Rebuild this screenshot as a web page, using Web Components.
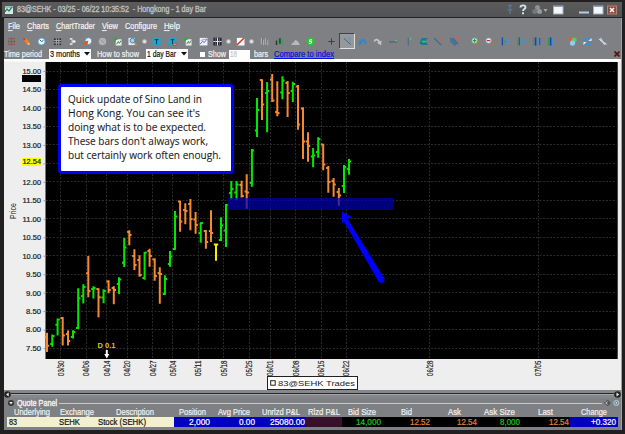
<!DOCTYPE html>
<html lang="en">
<head>
<meta charset="utf-8">
<title>83@SEHK</title>
<style>
  html, body { margin: 0; padding: 0; background: #211f20; }
  body { font-family: "Liberation Sans", Arial, sans-serif; overflow: hidden; }
</style>
</head>
<body>
<trader-window></trader-window>

<script>
// A single line of text set to an exact width
class FitText extends HTMLElement {
  constructor() {
    super();
    this.attachShadow({ mode: 'open' });
  }

  connectedCallback() {
    const w = parseFloat(this.getAttribute('w'));
    const size = parseFloat(this.getAttribute('size') || 9);
    const key = this.getAttribute('key');
    const s = this.getAttribute('text');
    let inner = s.replace(/&/g, '&amp;');
    if (key !== null) {
      const k = parseInt(key);
      inner = `${s.slice(0, k)}<tspan text-decoration="underline">${s[k]}</tspan>${s.slice(k + 1)}`;
    }
    this.shadowRoot.innerHTML = `
      <style>
        :host { display: block; flex: none; width: ${w}px; height: ${size}px; }
        svg { display: block; overflow: visible; }
        text { font-size: ${size}px; fill: currentColor; stroke: currentColor; stroke-width: var(--weight, .2px); white-space: pre; }
      </style>
      <svg width="${w}" height="${size}"><text x="0" y="${size * 0.86}" textLength="${w}" lengthAdjust="spacingAndGlyphs">${inner}</text></svg>
    `;
  }
}
customElements.define('fit-text', FitText);

const fit = (text, w, size = 9, extra = '') => `<fit-text text="${text.replace(/&/g, '&amp;')}" w="${w}" size="${size}" ${extra}></fit-text>`;

// Icon artwork on a 10x10 grid
const ICONS = {
  move: '<path d="M5 .5l1.500 2h-3zM5 9.500l1.500-2h-3zM.5 5l2-1.500v3zM9.500 5l-2-1.500v3z" fill="#d11f2a"/><path d="M1.500 2h1.500M7 2h1.500M1.500 8h1.500M7 8h1.500" stroke="#a33" stroke-width="1.200"/><rect x="4" y="4" width="2" height="2" fill="#555"/>',
  pencil: '<path d="M1 2l3-1 5 5-1 3-3-1z" fill="#ee8122"/><path d="M1 2l2-1 1 2-2 1z" fill="#c33"/><path d="M7 6l2 3-3-1z" fill="#ffd28a"/>',
  clock: '<circle cx="5" cy="5" r="4" fill="#e8f6ff" stroke="#4a9cc4"/><path d="M5 5L3 3M5 5l2-1" stroke="#234" stroke-width=".9"/>',
  grid: '<rect x="1" y="1.5" width="8" height="7.5" fill="#34363c"/><path d="M1 4h8M1 6.5h8M3.7 1.5V9M6.4 1.5V9" stroke="#ccc" stroke-width=".8"/>',
  export: '<path d="M2 1h3v3h3v2H5v3H2V7h2V3H2z" fill="#d9dadd"/><path d="M6 3l3 2-3 2z" fill="#eee"/>',
  clockEdit: '<circle cx="6" cy="4.5" r="3.8" fill="#e8f6ff" stroke="#4a9cc4"/><path d="M1 9l1-4 4-1-1 4z" fill="#e8521f"/>',
  disc: '<circle cx="5" cy="5" r="4.2" fill="#b1b1b1"/><path d="M3 3l4 4" stroke="#999"/>',
  chartAdd: '<rect x="3" y="2.5" width="6.5" height="7" fill="#e7efe9"/><path d="M4 8l2-3 1 2 2-3" stroke="#3a7a55" fill="none"/><path d="M2.5 0v5M0 2.5h5" stroke="#28b13a" stroke-width="1.6"/>',
  search: '<rect x=".5" y="1" width="7" height="8" fill="#dfe7ee"/><circle cx="5" cy="4" r="2.6" fill="#9fd3f5" stroke="#3b7db0"/><path d="M7 6l2.5 3" stroke="#d88a36" stroke-width="1.6"/>',
  dot: '<circle cx="5" cy="5" r="2.5" fill="#c2c2c2"/><circle cx="5" cy="5" r="1.300" fill="#e8e8e8"/>',
  textBox: '<rect x=".8" y=".8" width="8.6" height="8.6" fill="#19a5dd"/><path d="M3 3h4.2M5.1 3v5" stroke="#063a52" stroke-width="1.1"/>',
  textDel: '<rect x=".8" y=".8" width="8.4" height="8" fill="#19a5dd"/><path d="M3 3h4M5 3v5" stroke="#063a52"/><circle cx="7.5" cy="8" r="2" fill="#e23b22"/><path d="M6.5 8h2" stroke="#fff" stroke-width=".8"/>',
  chartLine: '<rect x=".8" y="1" width="8.6" height="8.4" fill="#eef2fa"/><path d="M1 8l3-3 2 1 3-4" stroke="#3b62d8" fill="none"/><path d="M2 4l3-1 3-1" stroke="#da5d68" stroke-width=".7"/>',
  panes: '<rect x=".5" y=".8" width="9" height="8.6" fill="#24242d"/><path d="M5 .8v8.6M.5 5h9" stroke="#dfe4f1" stroke-width="1.2"/><path d="M2.7 1v8M7.3 1v8" stroke="#777c91" stroke-width=".7"/>',
  pen: '<rect x="1" y="1" width="8.4" height="8.4" fill="#fafafa"/><path d="M1 9l8-8" stroke="#d6331d" stroke-width="1.6"/>',
  bars: '<path d="M1.5 1v7M4 3v6M6.3 1.5v7M8.6 3v6" stroke="#b9b9b9"/><path d="M2.8 2v5M7.5 2v5" stroke="#666" stroke-width=".6"/>',
  candles: '<path d="M1.7 4v5M5.5 1.5v6" stroke="#333" stroke-width="1.6"/><path d="M3.4 2v6M8 2v7" stroke="#2fa254" stroke-width="1.3"/>',
  area: '<path d="M.5 9V7.500l2-1L5 3l2 1.500 2.500 3V9z" fill="#b8b8b8"/>',
  money: '<circle cx="5" cy="5" r="4.5" fill="#26c52d"/><path d="M6.8 3.2H4.1L3.7 5h2.7L6 6.9H3.2" fill="none" stroke="#fff" stroke-width="1.1"/>',
  plus: '<path d="M5 1.5v7M1.5 5h7" stroke="#37393d"/>',
  line: '<path d="M1 1.5l7.5 7" stroke="#1b6ea6" stroke-width="1.1"/><path d="M5 1h3v7" stroke="#4f7390" fill="none" stroke-width=".7" stroke-dasharray="1 1"/>',
  undo: '<path d="M3 6.500C3.500 2.500 8 1 8.500 8" stroke="#2489d6" stroke-width="2" fill="none"/><path d="M.5 4l5 2.500-4.500 3z" fill="#2489d6"/>',
  redo: '<path d="M7 6.500C6.500 2.500 2.500 1.500 1.500 5" stroke="#c4c4c4" stroke-width="2" fill="none"/><path d="M9.500 4l-5 2.500 4.500 3z" fill="#c4c4c4"/>',
  hline: '<path d="M0 5.5h9" stroke="#315f70"/><circle cx="7.5" cy="4" r="1" fill="#4fd65d"/>',
  vline: '<path d="M2.5 1v8.5" stroke="#2e6c91"/><circle cx="5" cy="2" r="1" fill="#4fd65d"/>',
  label: '<path d="M3 1h6.500v1.500H8V7h1.500v2H3L.5 7z" fill="#147d94"/><path d="M3.500 5h4" stroke="#35d978" stroke-width="1.500"/>',
  lineDel: '<path d="M0 1l8 8" stroke="#286d9c" stroke-width="1.2"/><rect x="6" y=".8" width="3" height="3" fill="#e55746"/>',
  linesDel: '<path d="M0 1l7 7M0 4l6 5.5M3 1l6 7" stroke="#286d9c" stroke-width="1.2"/><rect x="6.5" y=".8" width="3" height="3" fill="#e55746"/>',
  zoomIn: '<path d="M5.5 5.5L9 9" stroke="#b4763c" stroke-width="1.7"/><circle cx="4" cy="4" r="3" fill="#d8f4d2" stroke="#7ca1bd" stroke-width=".8"/><path d="M4 2v4M2 4h4" stroke="#1ba51f" stroke-width="1.4"/>',
  zoomOut: '<path d="M5.5 5.5L9 9" stroke="#b4763c" stroke-width="1.7"/><circle cx="4" cy="4" r="3" fill="#e6eff6" stroke="#7ca1bd" stroke-width=".8"/><path d="M2 4h4" stroke="#d12d1d" stroke-width="1.4"/>',
  stepR: '<path d="M1.500 .5v9" stroke="#1c3fb8" stroke-width="1.3"/><path d="M3.500 2v6" stroke="#25a54e"/><path d="M5 5h3" stroke="#25b"/><path d="M6 2.500L9.500 5 6 7.500z" fill="#3a94e4"/>',
  stepRR: '<path d="M1 .5v9" stroke="#25a53e" stroke-width="1.2"/><path d="M2.600 .5v9" stroke="#1c3fb8"/><path d="M4 5h4" stroke="#3a94e4"/><path d="M6 2.500L9.500 5 6 7.500z" fill="#3a94e4"/>',
  squeeze: '<path d="M1.5 .5v9" stroke="#25a53e" stroke-width="1.2"/><path d="M4 .5v9" stroke="#1c3fb8" stroke-width="1.8"/><path d="M5 2.8L8 .8v4zM5 7L8 5v4z" fill="#3a94e4"/><path d="M8.6 1v8" stroke="#1c3fb8"/>',
  spread: '<path d="M1.5 .5v9" stroke="#25a53e" stroke-width="1.2"/><path d="M4 .5v9" stroke="#1c3fb8" stroke-width="1.8"/><path d="M8.8 2.8L5.800 .8v4zM8.8 7L5.800 5v4z" fill="#3a94e4"/>',
  balls: '<circle cx="3.5" cy="3.300" r="2.9" fill="#e15c36"/><circle cx="6.8" cy="3.4" r="2.8" fill="#60c95a"/><circle cx="5" cy="6.800" r="2.9" fill="#8ccdf2"/>',
  refresh: '<path d="M1.5 4.5C2 1 7 .5 8.5 3.5M8.5 5.5C8 9 3 9.5 1.5 6.5" fill="none" stroke="#2a96df" stroke-width="1.7"/><path d="M9.5 1v3.4H6zM.5 9V5.6H4z" fill="#d7eefc"/>',
  wrench: '<path d="M2.5 2.7l5.6 5.6" stroke="#c7d4e2" stroke-width="2"/><path d="M.8 2l2 2L4 2.5 2.5.8M6.5 8L8 6.5l1.5 2" stroke="#d7e1ec" fill="none" stroke-width="1.1"/>'
};

const TOOLS = [
  ['move', 11], ['pencil', 26.5], ['clock', 41.5], ['grid', 57], ['export', 72], ['clockEdit', 87],
  ['disc', 102.5], ['chartAdd', 117.5], ['search', 132.5], ['dot', 144], ['textBox', 156.5],
  ['textDel', 172], ['chartAdd', 187], ['chartLine', 203], ['panes', 217.5], ['dot', 228.5],
  ['pen', 240.5], ['dot', 251.5], ['bars', 264.5], ['candles', 279.5], ['area', 295], ['money', 310.5],
  ['plus', 331.5], ['line', 347, true], ['undo', 362], ['redo', 377], ['hline', 393], ['vline', 410],
  ['label', 423.5], ['lineDel', 438.5], ['linesDel', 454], ['zoomIn', 475], ['zoomOut', 489.5],
  ['stepR', 505], ['stepRR', 521], ['squeeze', 536], ['spread', 551], ['balls', 572],
  ['refresh', 587], ['wrench', 602.5]
];

class TitleBar extends HTMLElement {
  constructor() {
    super();
    this.attachShadow({ mode: 'open' }).innerHTML = `
      <style>
        :host {
          display: flex; align-items: center; box-sizing: border-box; height: 16px;
          padding: 0 5px 0 3px; background: linear-gradient(#5b5b5c, #515253);
          border-bottom: 1px solid #222; color: #bdbdbd;
        }
        .logo { margin-right: 3.5px; }
        .tools { display: flex; align-items: center; margin-left: auto; }
        svg { display: block; }
        fit-text { --weight: .4px; }
      </style>
      <svg class="logo" width="8" height="8"><rect width="8" height="8" fill="#dce6ec"/><path d="M0 6l2-3 2 2 3-4" stroke="#26874a" fill="none" stroke-width="1.3"/><path d="M0 1h8" stroke="#4b8fc0"/></svg>
      ${fit('83@SEHK - 03/25 - 06/22 10:35:52  - Hongkong - 1 day Bar', 189, 8.3)}
      <div class="tools">
        <svg width="112" height="14" viewBox="505 3 112 14">
          <path d="M508 5.500h4M510 5v4.500M507.500 9.700h5M510 10v4" stroke="#56768f" stroke-width="1.500"/>
          <path d="M520.500 7.500c0-2.800 5-2.800 5 0 0 1.500-2.500 1.700-2.500 3.500M523 12.300v1.900" fill="none" stroke="#cfe6f2" stroke-width="1.900"/>
          <circle cx="537.500" cy="7.500" r="2.500" fill="#909090"/><circle cx="534.700" cy="11.500" r="2.500" fill="#777"/><circle cx="539.500" cy="11.500" r="2.500" fill="#999"/>
          <path d="M543.500 9h4l-2 3z" fill="#aaa"/>
          <rect x="553.500" y="6" width="9.500" height="8" fill="#f5f6f8" stroke="#9bb1c5"/><path d="M553.500 6.500h9.500" stroke="#7fa2c6"/>
          <rect x="579" y="11.500" width="10" height="2" fill="#b4cde3"/>
          <rect x="593.500" y="6" width="9.500" height="8" fill="#f5f6f8" stroke="#9bb1c5"/><path d="M593.500 6.500h9.500" stroke="#7fa2c6"/>
          <rect x="607.500" y="6" width="9" height="8" fill="#8e4a3c" stroke="#b97e70"/><path d="M610 8l4 4M614 8l-4 4" stroke="#fff" stroke-width="1.500"/>
        </svg>
      </div>
    `;
  }
}
customElements.define('title-bar', TitleBar);

class MenuBar extends HTMLElement {
  constructor() {
    super();
    const items = [['File', 12, 0], ['Charts', 22, 0], ['ChartTrader', 39, 0], ['View', 16, 0], ['Configure', 32, 2], ['Help', 16, 0]];
    this.attachShadow({ mode: 'open' }).innerHTML = `
      <style>
        :host { display: flex; align-items: center; gap: 7px; height: 15px; padding: 1px 0 0 4px; box-sizing: border-box; color: #f4f4f4; }
      </style>
      ${items.map(([t, w, k]) => fit(t, w, 8.3, `key="${k}"`)).join('')}
    `;
  }
}
customElements.define('menu-bar', MenuBar);

class ToolStrip extends HTMLElement {
  constructor() {
    super();
    let edge = 4;
    const cells = TOOLS.map(([name, cx, on]) => {
      const size = on ? 16 : 9;
      const gap = cx - size / 2 - edge;
      edge = cx + size / 2;
      return `<span class="${on ? 'on' : ''}" style="margin-left:${gap}px"><svg width="9" height="9" viewBox="0 0 10 10">${ICONS[name]}</svg></span>`;
    });
    this.attachShadow({ mode: 'open' }).innerHTML = `
      <style>
        :host { display: flex; align-items: center; height: 16px; }
        span { display: flex; flex: none; align-items: center; justify-content: center; width: 9px; }
        .on {
          width: 16px; height: 16px; box-sizing: border-box; background: #96999c;
          border: 1px solid; border-color: #404347 #e0e0e0 #e0e0e0 #404347;
        }
        svg { display: block; flex: none; }
      </style>
      ${cells.join('')}
    `;
  }
}
customElements.define('tool-strip', ToolStrip);

class DropSelect extends HTMLElement {
  constructor() {
    super();
    this.attachShadow({ mode: 'open' });
  }

  connectedCallback() {
    this.shadowRoot.innerHTML = `
      <style>
        :host {
          display: flex; flex: none; align-items: center; justify-content: space-between; box-sizing: border-box;
          width: 42px; height: 10px; padding: 0 1.5px 0 1px; background: #fff; color: #111;
        }
      </style>
      <slot></slot>
      <svg width="6" height="4"><path d="M0 0h6L3 3.500z" fill="#111"/></svg>
    `;
  }
}
customElements.define('drop-select', DropSelect);

class PeriodBar extends HTMLElement {
  constructor() {
    super();
    this.attachShadow({ mode: 'open' }).innerHTML = `
      <style>
        :host { display: flex; align-items: center; height: 10px; color: #f2f2f2; }
        .box { width: 5px; height: 5px; margin-left: 6px; background: #fff; flex: none; }
        .count { display: flex; align-items: center; width: 20px; height: 9px; margin: 0 4px 0 3px; padding-left: 1px; background: #fff; color: #c4c4c4; }
        .link { color: #0b10d8; border-bottom: 1px solid #0b10d8; height: 8px; margin-left: 6px; }
        .close { margin: 0 1px 0 auto; }
        drop-select { margin: 0 6px 0 7px; }
      </style>
      ${fit('Time period', 38, 8.3)}
      <drop-select>${fit('3 months', 30, 8.3)}</drop-select>
      ${fit('How to show', 42, 8.3)}
      <drop-select>${fit('1 day Bar', 29, 8.3)}</drop-select>
      <span class="box"></span>
      <span style="margin-left:3px">${fit('Show', 18, 8.3)}</span>
      <span class="count">${fit('18', 7, 8.3)}</span>
      ${fit('bars', 14, 8.3)}
      <span class="link">${fit('Compare to index', 60, 8.3)}</span>
      <svg class="close" width="6" height="6"><path d="M.5 .5l5 5M5.500 .5l-5 5" stroke="#5c0d0d" stroke-width="1.600"/></svg>
    `;
  }
}
customElements.define('period-bar', PeriodBar);

// x, high, low, open, close, in window pixels; colour follows from open and close
const BARS = [
  [47, 332.7, 352, 337, 345.7], [52.3, 334.5, 346.7, 344, 336], [57.6, 318.5, 335.6, 324.7, 319.5],
  [62.7, 317, 345.6, 318, 335.6], [68, 330.6, 345.6, 334, 341], [73, 330.3, 338.6, 337, 332],
  [78.2, 288.3, 329, 328, 298.3], [83.3, 284.3, 303.6, 296, 287], [88.3, 256, 297.3, 273.3, 291],
  [93.4, 286.3, 298.6, 289, 288], [98.5, 288.3, 317.3, 289, 297.3], [103.6, 289.3, 303.3, 297.5, 291],
  [108.6, 280.3, 293.3, 281.5, 290], [113.8, 286.3, 304.3, 288, 290], [119, 277.3, 294, 284, 279.5],
  [124.2, 238, 267, 262.7, 247.5], [129.3, 230.3, 245.3, 232, 235], [134.4, 249.3, 270, 256, 265],
  [139.5, 255.3, 276.7, 260, 275], [144.6, 252, 279.7, 278, 252.5], [149.6, 248.7, 266.7, 251, 256],
  [154.7, 258.3, 280.7, 259.5, 276], [159.8, 267.3, 303.7, 273, 274], [164.9, 275.3, 295, 294, 279],
  [170, 251, 266.7, 264, 256.5], [175, 211, 250, 249, 216.5], [180.1, 200.7, 231.7, 201.5, 221.5],
  [185.3, 203.3, 224.3, 210, 211], [190.4, 199, 230.3, 204, 219], [195.6, 212, 233.7, 219.5, 225],
  [200.7, 222.3, 242.7, 233, 223], [205.9, 230, 248.7, 231, 242], [211, 210.3, 242, 231, 233],
  [216, 243.7, 260.8, 244.5, 244.5], [221, 217.3, 241, 240, 225.5], [226, 204, 247, 230.5, 205],
  [231.3, 181, 199.5, 193, 189], [236.5, 181, 200, 192.5, 184.5], [241.6, 180.7, 197.5, 185, 196],
  [246.7, 174.3, 208.7, 191.5, 192.5], [251.9, 149, 186.7, 183, 150.5], [257, 98, 137, 130.5, 110],
  [262, 79.3, 120, 80, 104.5], [267.1, 82, 132.3, 93, 91], [272.2, 74, 102, 79.5, 100.5],
  [277.3, 81.3, 116.3, 112, 113], [282.4, 76.3, 99.3, 92.5, 80.5], [287.6, 81, 117, 83, 93],
  [292.8, 81.7, 102, 91, 84], [298, 85, 129.7, 86.5, 124.5], [303, 107.3, 159, 108.5, 141.5],
  [308, 132.3, 161.7, 141.5, 146], [313.1, 148, 167.3, 156.5, 155.5], [318.2, 137.3, 157.7, 152, 139],
  [323.2, 143.7, 170.3, 144.5, 164.5], [328.3, 166, 192.7, 168, 182], [333.6, 178, 196.7, 181, 184.5],
  [338.8, 188, 205.7, 192, 195.5], [344, 165, 193, 186, 167], [349, 159, 174.7, 169, 161.5]
];

const DATES = [
  ['03/30', 60.5], ['04/06', 86.2], ['04/14', 106.5], ['04/20', 127.2], ['04/27', 152.7], ['05/04', 172.7],
  ['05/11', 198.3], ['05/18', 223.6], ['05/25', 249.3], ['06/01', 270.4], ['06/08', 295.5],
  ['06/15', 321.3], ['06/22', 346.4], ['06/28', 429.6], ['07/05', 538.4]
];

class PriceChart extends HTMLElement {
  constructor() {
    super();
    this.attachShadow({ mode: 'open' });
  }

  connectedCallback() {
    this.shadowRoot.innerHTML = `
      <style>
        :host { display: block; position: relative; height: 331px; background: #eee; }
        svg { display: block; font-family: "Liberation Sans", Arial, sans-serif; }
        .grid { stroke: #2b2b2b; stroke-width: 1; stroke-dasharray: 2 1.5; }
        ::slotted(*) { position: absolute; left: 54px; top: 25px; }
      </style>
      <svg width="617" height="331" viewBox="4 59 617 331">
        <rect x="4" y="59" width="617" height="2.500" fill="#fff"/>
        <rect x="45.500" y="62" width="572.200" height="297" fill="#000"/>
        ${this.renderGrid()}
        <g stroke-width="2">${BARS.map(b => this.renderBar(b)).join('')}</g>
        <rect x="227.500" y="198" width="166.500" height="12" fill="#0000b4" fill-opacity=".7"/>
        <path d="M342 211.500L352 217.200L347.500 218.700L384 278A3 3 0 0 1 378.400 281.300L344 221.500L342 223.500Z" fill="#0000ff"/>
        <text x="97.500" y="348" font-size="6.500" font-weight="bold" fill="#d8cf00" textLength="18" lengthAdjust="spacingAndGlyphs">D 0.1</text>
        <path d="M105.800 350h2v4h1.500L106.800 358.500L104.300 354h1.500z" fill="#fff"/>
        <text transform="translate(16 219) rotate(-90)" font-size="9" fill="#222" textLength="16" lengthAdjust="spacingAndGlyphs">Price</text>
        <rect x="267.500" y="376.500" width="90" height="13" fill="#fff" stroke="#222"/>
        <rect x="270.700" y="380.700" width="4.500" height="4.500" fill="#fff" stroke="#222"/>
        <text x="278" y="386" font-size="7.500" fill="#222" textLength="77" lengthAdjust="spacingAndGlyphs">83@SEHK Trades</text>
      </svg>
      <slot></slot>
    `;
  }

  renderGrid() {
    let out = '<rect x="22" y="75" width="19" height="7" fill="#000"/><rect x="22" y="158" width="19" height="8" fill="#ffff00"/>';
    for (let i = 0; i <= 15; i++) {
      const y = 71.5 + i * 18.47;
      const price = (15 - i / 2).toFixed(2);
      const x = price.length > 4 ? 22.5 : 26;
      out += `<path class="grid" d="M46 ${Math.round(y) - 0.5}H617.500"/><path d="M43.500 ${y}h2" stroke="#999"/>`;
      if (price !== '12.50') out += this.priceText(x, y + 2.4, price);
    }
    out += this.priceText(22.5, 164.4, '12.54');
    DATES.forEach(([d, x]) => {
      out += `<path class="grid" d="M${Math.round(x - 0.5) + 0.5} 62V359"/>`;
      out += `<text transform="translate(${x + 3} 376) rotate(-90)" font-size="8.500" fill="#1c1c1c" stroke="#1c1c1c" stroke-width=".15" textLength="15.500" lengthAdjust="spacingAndGlyphs">${d}</text>`;
    });
    return out;
  }

  priceText(x, y, s) {
    return `<text x="${x}" y="${y}" font-size="6.700" fill="#222" stroke="#222" stroke-width=".2" textLength="${41 - x}" lengthAdjust="spacingAndGlyphs">${s}</text>`;
  }

  renderBar([x, high, low, open, close]) {
    let color = close < open ? '#00ea00' : '#f58a2e';
    if (x === 216) color = '#f4ee00';
    return `<path d="M${x} ${high}V${low}M${x - 2.2} ${open}h2.200M${x} ${close}h2.200" stroke="${color}"/>`;
  }
}
customElements.define('price-chart', PriceChart);

class NoteCard extends HTMLElement {
  constructor() {
    super();
    const lines = [
      ['Quick update of Sino Land in', 134], ["Hong Kong. You can see it's", 132],
      ['doing what is to be expected.', 138], ["These bars don't always work,", 140],
      ['but certainly work often enough.', 153]
    ];
    this.attachShadow({ mode: 'open' }).innerHTML = `
      <style>
        :host {
          display: flex; flex-direction: column; gap: 3px; box-sizing: border-box; width: 176px; height: 90px;
          padding: 7px 0 0 7px; background: #fff; border: 3px solid #0000ff; border-radius: 4px;
          font-family: "Open Sans", "Noto Sans", sans-serif; color: #1c1c1c; --weight: .1px;
        }
      </style>
      ${lines.map(([t, w]) => fit(t, w, 11)).join('')}
    `;
  }
}
customElements.define('note-card', NoteCard);

class QuotePanel extends HTMLElement {
  constructor() {
    super();
    // heading, heading width, column width, value, value width, cell class
    const cols = [
      ['Underlying', 36, 50, '83', 8, 'id'], ['Exchange', 34, 39, 'SEHK', 21, 'id'],
      ['Description', 38, 78, 'Stock (SEHK)', 48, 'id'], ['Position', 27, 37, '2,000', 21, 'blue'],
      ['Avg Price', 32, 45, '0.00', 16, 'blue'], ['Unrlzd P&L', 38, 50, '25080.00', 35, 'blue'],
      ['Rlzd P&L', 32, 36, '', 0, 'plum'], ['Bid Size', 28, 40, '14,000', 25, 'green'],
      ['Bid', 11, 49, '12.52', 20, 'orange'], ['Ask', 13, 47, '12.54', 20, 'orange'],
      ['Ask Size', 31, 43, '8,000', 20, 'green'], ['Last', 15, 49, '12.54', 20, 'orange'],
      ['Change', 26, 47.5, '+0.320', 25, 'blue']
    ];
    this.attachShadow({ mode: 'open' }).innerHTML = `
      <style>
        :host { display: block; height: 40px; color: #f1f1f1; }
        .split { display: flex; align-items: center; height: 8px; background: #85878a; }
        .split i { flex: 1; height: 1px; background: #27282a; border-bottom: 1px solid #a4a5a7; }
        .head { display: flex; align-items: center; height: 10px; padding: 0 1px 0 4px; }
        .head i { flex: 1; height: 1px; margin: 0 2px; background: #c9c9ca; }
        .head fit-text { margin-left: 3px; --weight: .4px; }
        .names, .row { display: grid; grid-template-columns: ${cols.map(c => c[2] + 'px').join(' ')}; margin-left: 3px; }
        .names { height: 9px; }
        .names span { display: flex; align-items: center; justify-content: center; }
        .row { height: 10px; }
        .row span { display: flex; align-items: center; justify-content: flex-end; box-sizing: border-box; padding-right: 1.5px; background: #000; }
        .row .id { justify-content: flex-start; padding-left: 2px; background: #f2f0ce; color: #111; }
        .row .blue { background: #0000c4; color: #fff; }
        .row .plum { background: #371029; }
        .row .green { color: #13cc1b; }
        .row .orange { color: #e68235; }
        svg { display: block; flex: none; }
      </style>
      <div class="split">
        <svg width="7" height="7"><circle cx="3.500" cy="3.500" r="3.300" fill="#222"/><path d="M4.700 1.500v4L2 3.500z" fill="#eee"/></svg>
        <i></i>
        <svg width="7" height="7"><circle cx="3.500" cy="3.500" r="3.300" fill="#222"/><path d="M2.500 1.500v4L5.200 3.500z" fill="#eee"/></svg>
      </div>
      <div class="head">
        <svg width="6" height="6"><circle cx="3" cy="3" r="3" fill="#333"/><path d="M1.200 2h3.600L3 4.600z" fill="#eee"/></svg>
        ${fit('Quote Panel', 40, 8.3)}
        <i></i>
        <svg width="16" height="8"><path d="M.5 4L4 1v6zM3 4h4M5 2v4" stroke="#3d444b" fill="#a9b4bf" stroke-width=".8"/><circle cx="12.300" cy="4" r="3" fill="#a7bac9"/><circle cx="12.300" cy="4" r="1.300" fill="#dbe6ee" stroke="#4d6271" stroke-width=".7"/></svg>
      </div>
      <div class="names">${cols.map(c => `<span>${fit(c[0], c[1], 8.3)}</span>`).join('')}</div>
      <div class="row">${cols.map(c => `<span class="${c[5]}">${c[3] ? fit(c[3], c[4], 8.3) : ''}</span>`).join('')}</div>
    `;
  }
}
customElements.define('quote-panel', QuotePanel);

class TraderWindow extends HTMLElement {
  constructor() {
    super();
    this.attachShadow({ mode: 'open' }).innerHTML = `
      <style>
        :host { display: block; box-sizing: border-box; width: 625px; height: 434px; padding: 2px 3px 4px 2px; background: #211f20; }
        .body { box-sizing: border-box; height: 412px; margin-left: 2px; border-right: 1px solid #a0a1a3; background: #7e8083; }
      </style>
      <title-bar></title-bar>
      <div class="body">
        <menu-bar></menu-bar>
        <tool-strip></tool-strip>
        <period-bar></period-bar>
        <price-chart><note-card></note-card></price-chart>
        <quote-panel></quote-panel>
      </div>
    `;
  }
}
customElements.define('trader-window', TraderWindow);
</script>
</body>
</html>
